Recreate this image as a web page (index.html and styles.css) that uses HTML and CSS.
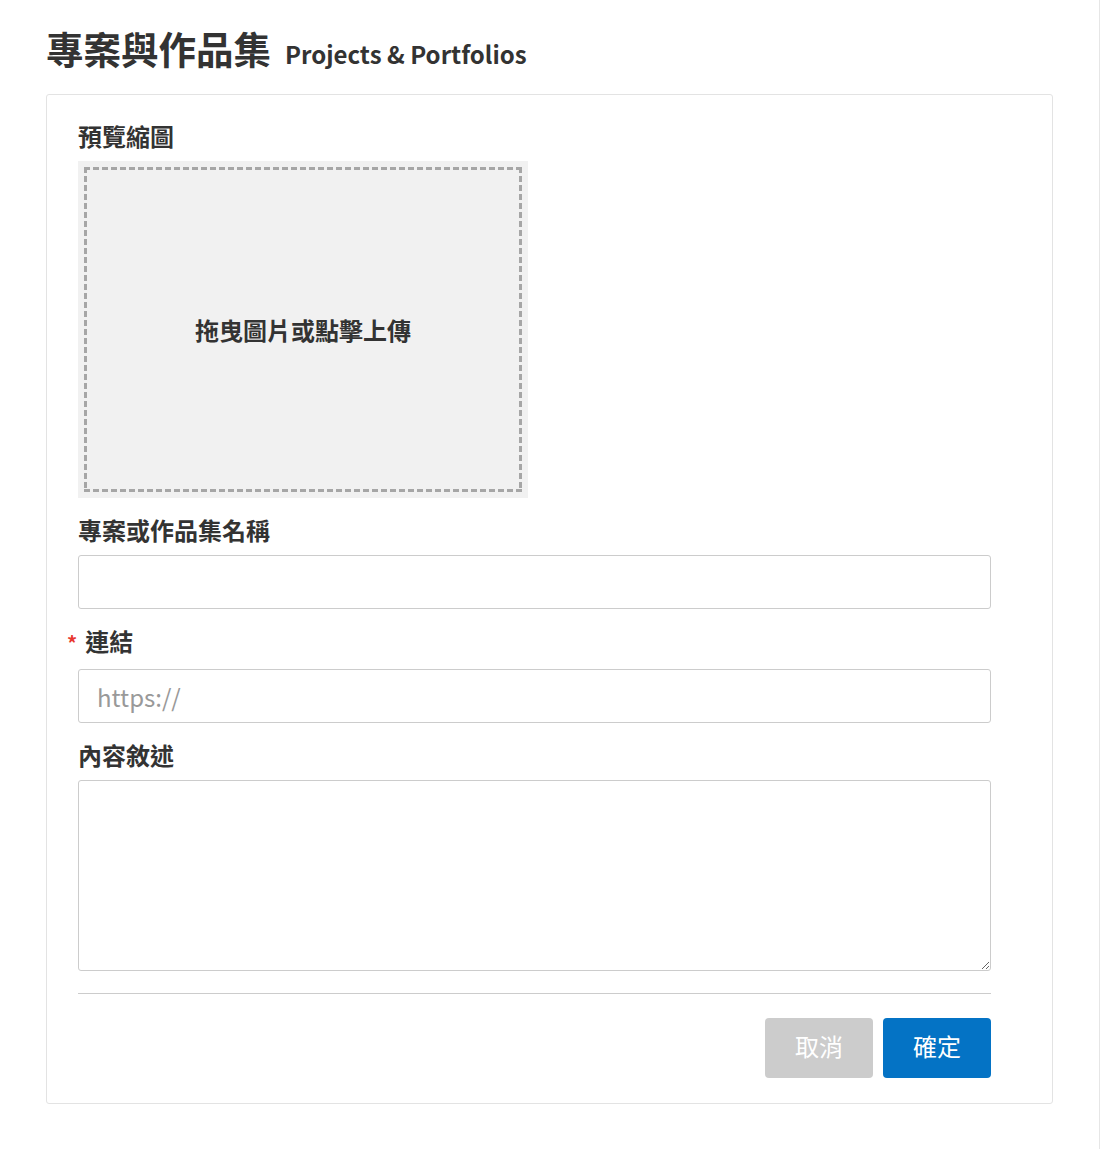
FILE: index.html
```html
<!DOCTYPE html>
<html lang="zh-Hant">
<head>
<meta charset="utf-8">
<title>專案與作品集</title>
<link rel="stylesheet" href="styles.css">
</head>
<body>
<div class="page">
  <header class="heading">
    <h1 class="title">專案與作品集</h1>
    <span class="subtitle">Projects &amp; Portfolios</span>
  </header>
  <section class="card">
    <form class="form">
      <div class="field">
        <label class="label">預覽縮圖</label>
        <div class="upload">
          <div class="upload-inner">拖曳圖片或點擊上傳</div>
        </div>
      </div>
      <div class="field">
        <label class="label" for="name">專案或作品集名稱</label>
        <input class="input" id="name" type="text">
      </div>
      <div class="field">
        <label class="label label-required" for="link">連結</label>
        <input class="input" id="link" type="text" placeholder="https://">
      </div>
      <div class="field">
        <label class="label" for="desc">內容敘述</label>
        <textarea class="textarea" id="desc"></textarea>
      </div>
      <hr class="divider">
      <div class="actions">
        <button type="button" class="btn btn-cancel">取消</button>
        <button type="button" class="btn btn-primary">確定</button>
      </div>
    </form>
  </section>
</div>
</body>
</html>
```
FILE: styles.css
```css
* {
  box-sizing: border-box;
}

html, body {
  margin: 0;
  padding: 0;
  background: #ffffff;
}

body {
  font-family: "Noto Sans CJK TC", "Noto Sans", sans-serif;
  color: #333333;
}

.page {
  width: 1100px;
  min-height: 1149px;
  border-right: 1px solid #e6e6e6;
  padding: 23px 0 0 46px;
}

.heading {
  display: flex;
  align-items: baseline;
  height: 50px;
}

.title {
  margin: 0;
  font-size: 37.5px;
  line-height: 50px;
  font-weight: 700;
  letter-spacing: 0;
}

.subtitle {
  margin-left: 14px;
  font-size: 24px;
  font-weight: 700;
}

.card {
  margin-top: 21px;
  width: 1007px;
  border: 1px solid #e3e3e3;
  border-radius: 3px;
  padding: 24px 61px 25px 31px;
}

.form {
  display: flex;
  flex-direction: column;
}

.field {
  display: flex;
  flex-direction: column;
  align-items: flex-start;
}

.field + .field {
  margin-top: 15px;
}

.label {
  font-size: 24px;
  line-height: 34px;
  font-weight: 700;
  margin-bottom: 8px;
}

.label-required {
  margin-bottom: 11px;
}

.label-required::before {
  content: "*";
  color: #e8372f;
  font-size: 20px;
  line-height: 0;
  margin-left: -11px;
  margin-right: 8px;
}

.upload {
  width: 450px;
  height: 337px;
  padding: 6px;
  background: #f1f1f1;
}

.upload-inner {
  height: 100%;
  display: flex;
  align-items: center;
  justify-content: center;
  font-size: 24px;
  font-weight: 700;
  color: #333333;
  background:
    repeating-linear-gradient(90deg, #a6a6a6 0 6px, transparent 6px 9px) top left / 100% 3px no-repeat,
    repeating-linear-gradient(90deg, #a6a6a6 0 6px, transparent 6px 9px) bottom left / 100% 3px no-repeat,
    repeating-linear-gradient(180deg, #a6a6a6 0 6px, transparent 6px 9px) top left / 3px 100% no-repeat,
    repeating-linear-gradient(180deg, #a6a6a6 0 6px, transparent 6px 9px) top right / 3px 100% no-repeat;
}

.input,
.textarea {
  width: 913px;
  border: 1px solid #cccccc;
  border-radius: 3px;
  font-family: inherit;
  font-size: 24px;
  color: #333333;
  background: #ffffff;
  outline: none;
}

.input {
  height: 54px;
  padding: 0 18px;
}

.input::placeholder {
  color: #999999;
}

.textarea {
  height: 191px;
  padding: 10px 18px;
  display: block;
  margin: 0;
}

.divider {
  width: 913px;
  margin: 22px 0 0 0;
  border: 0;
  border-top: 1px solid #cccccc;
  height: 0;
}

.actions {
  width: 913px;
  margin-top: 24px;
  display: flex;
  justify-content: flex-end;
  gap: 10px;
}

.btn {
  width: 108px;
  height: 60px;
  border: 0;
  border-radius: 4px;
  font-family: inherit;
  font-size: 24px;
  font-weight: 400;
  line-height: 1;
  color: #ffffff;
  padding: 0 0 4px 0;
}

.btn-cancel {
  background: #cccccc;
}

.btn-primary {
  background: #0473c5;
}
```
